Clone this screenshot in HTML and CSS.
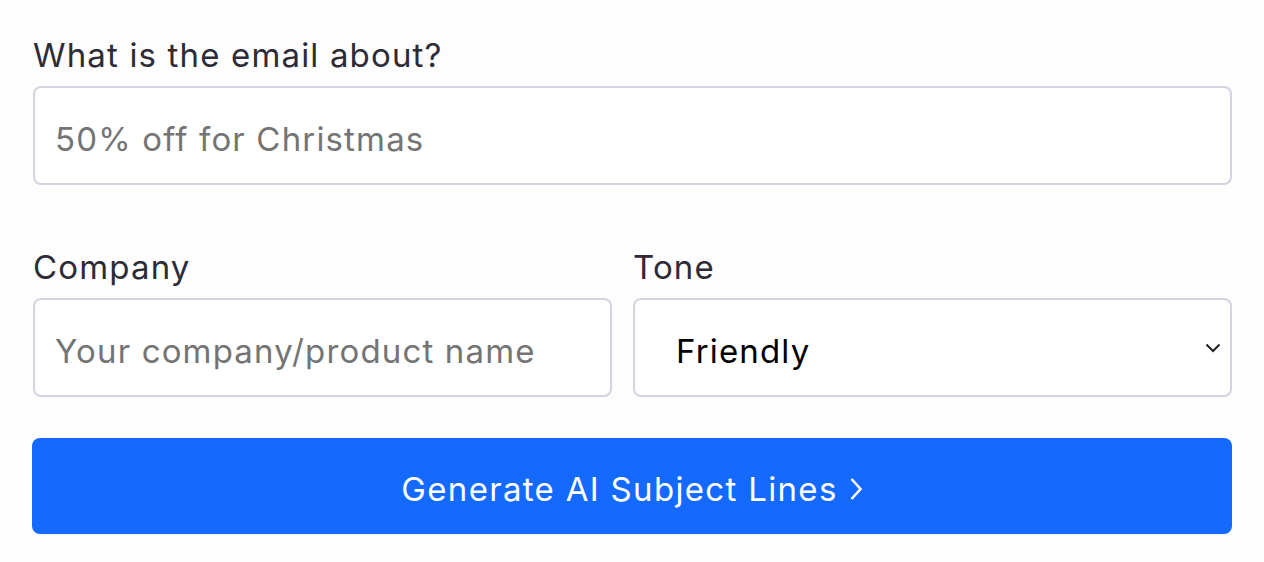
FILE: index.html
```html
<!DOCTYPE html>
<html>
<head>
<meta charset="utf-8">
<link rel="stylesheet" href="styles.css">
</head>
<body>
<form class="form">
  <div class="field">
    <label class="label">What is the email about?</label>
    <input class="input" type="text" placeholder="50% off for Christmas">
  </div>
  <div class="row">
    <div class="field">
      <label class="label">Company</label>
      <input class="input" type="text" placeholder="Your company/product name">
    </div>
    <div class="field">
      <label class="label">Tone</label>
      <div class="select">
        <span class="select-value">Friendly</span>
        <svg class="select-chevron" width="16" height="10" viewBox="0 0 16 10"><path d="M1.5 1.5 L8 8 L14.5 1.5" fill="none" stroke="#222" stroke-width="2"/></svg>
      </div>
    </div>
  </div>
  <button class="button" type="button">Generate AI Subject Lines
    <svg class="button-chevron" width="14" height="24" viewBox="0 0 14 24"><path d="M2.5 2 L11.5 12 L2.5 22" fill="none" stroke="#fff" stroke-width="2.6"/></svg>
  </button>
</form>
</body>
</html>
```

FILE: styles.css
```css
html, body {
  margin: 0;
  padding: 0;
  background: #fdfdfe;
}
body {
  font-family: Inter, "Noto Sans", sans-serif;
}
.form {
  display: flex;
  flex-direction: column;
  padding: 31px 33px 0 33px;
  width: 1199px;
}
.field {
  display: flex;
  flex-direction: column;
}
.label {
  font-size: 33px;
  line-height: 48px;
  letter-spacing: 0.035em;
  color: #2c2b36;
  margin-bottom: 7px;
}
.input {
  box-sizing: border-box;
  height: 99px;
  border: 2px solid #d4d3e2;
  border-radius: 8px;
  background: #fff;
  padding: 6px 20px 0 20px;
  font-family: Inter, "Noto Sans", sans-serif;
  font-size: 33px;
  letter-spacing: 0.035em;
  color: #222;
  outline: none;
}
.input::placeholder {
  color: #747474;
}
.row {
  display: grid;
  grid-template-columns: 579px 599px;
  column-gap: 21px;
  margin-top: 58px;
}
.select {
  box-sizing: border-box;
  height: 99px;
  border: 2px solid #d4d3e2;
  border-radius: 8px;
  background: #fff;
  display: flex;
  align-items: center;
  justify-content: space-between;
  padding: 6px 9px 0 41px;
}
.select-value {
  font-family: Inter, "Noto Sans", sans-serif;
  font-size: 33px;
  letter-spacing: 0.035em;
  color: #000;
}
.select-chevron {
  display: block;
  margin-top: -6px;
}
.button {
  margin-top: 41px;
  height: 96px;
  width: 1200px;
  margin-left: -1px;
  border: none;
  border-radius: 8px;
  background: #1469ff;
  color: #fff;
  font-family: Inter, "Noto Sans", sans-serif;
  font-size: 33px;
  letter-spacing: 0.04em;
  padding: 5px 0 0 0;
  display: flex;
  align-items: center;
  justify-content: center;
  gap: 11px;
  cursor: pointer;
}
.button-chevron {
  display: block;
}
```
